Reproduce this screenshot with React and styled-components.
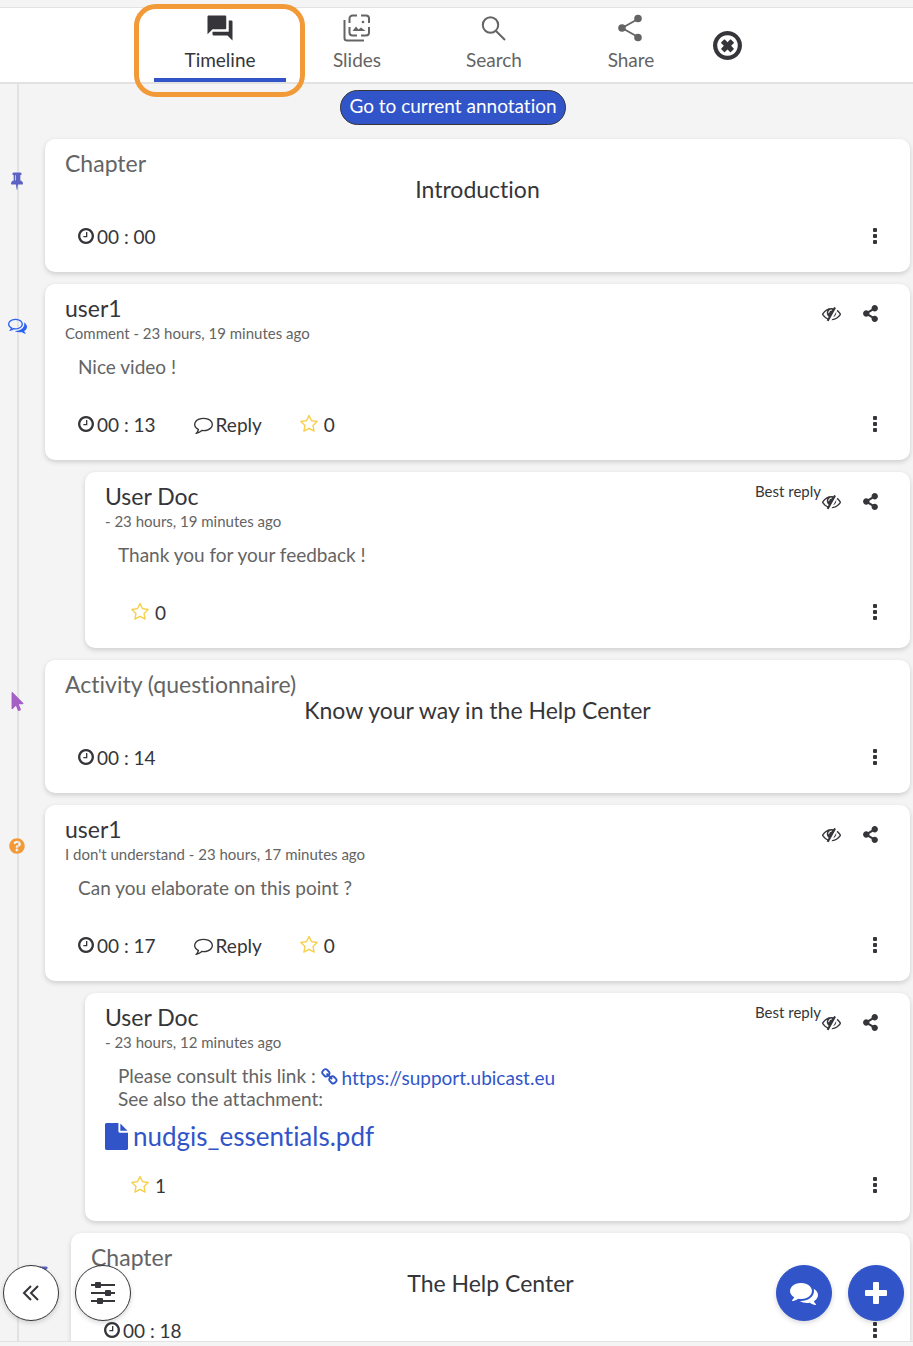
import React from 'react'
import styled, { createGlobalStyle } from 'styled-components';
import { FaMousePointer, FaQuestionCircle, FaShareAlt } from 'react-icons/fa';
import { MdQuestionAnswer } from 'react-icons/md';

const dark = '#35353a';
const grey = '#646464';
const blue = '#3155c9';
const line = '#e2e2e2';

const GlobalStyle = createGlobalStyle`
  * {
    box-sizing: border-box;
  }
  body {
    margin: 0;
    background-color: #f4f4f4;
    color: ${dark};
    font-family: Lato, "Liberation Sans", sans-serif;
    font-size: 19px;
    font-variant-ligatures: none;
    line-height: 23px;
  }
  h2, h3, p, ul {
    margin: 0;
    padding: 0;
    font-weight: 400;
  }
  ul {
    list-style: none;
  }
  button {
    border: none;
    padding: 0;
    background: none;
    color: inherit;
    font: inherit;
    font-variant-ligatures: none;
    cursor: pointer;
  }
  a {
    color: ${blue};
    text-decoration: none;
  }
  svg {
    display: block;
    flex-shrink: 0;
  }
`

const Page = styled.div`
  display: flex;
  flex-direction: column;
  height: 100vh;
  padding: 7px 0 4px;
`

const Panel = styled.div`
  position: relative;
  display: flex;
  flex-direction: column;
  flex: 1;
  min-height: 0;
  border-top: 1px solid ${line};
  border-bottom: 1px solid ${line};
`

const Header = styled.header`
  position: relative;
  z-index: 1;
  display: flex;
  justify-content: center;
  flex-shrink: 0;
  padding-right: 6px;
  background-color: #fff;
  border-bottom: 2px solid ${line};
`

const Tab = styled.button`
  position: relative;
  display: flex;
  flex-direction: column;
  align-items: center;
  width: 137px;
  height: 74px;
  padding-top: 4px;
  color: ${({ $active }) => ($active ? dark : grey)};

  span {
    display: flex;
    flex-direction: column;
    align-items: center;
    gap: 5px;
    width: 132px;
    height: 70px;
    padding-top: 1px;
    border-bottom: 4px solid ${({ $active }) => ($active ? blue : 'transparent')};
  }
  svg {
    height: 30px;
  }
`

const Highlight = styled.i`
  position: absolute;
  top: -4px;
  left: -18px;
  right: -16px;
  bottom: -15px;
  border: 5px solid #f29a37;
  border-radius: 22px;
  pointer-events: none;
`

const CloseButton = styled.button`
  display: flex;
  align-items: center;
  justify-content: center;
  width: 56px;
`

const Scroll = styled.main`
  flex: 1;
  min-height: 0;
  overflow-y: auto;
  scrollbar-width: none;
`

const Timeline = styled.div`
  margin-left: 17px;
  padding: 6px 3px 100px 0;
  border-left: 2px solid ${line};
`

const GoTo = styled.div`
  display: flex;
  justify-content: center;
  margin: 0 4px 14px -19px;
`

const GoToButton = styled.button`
  height: 35px;
  padding: 0 8px 4px;
  background-color: ${blue};
  border: 1px solid ${dark};
  border-radius: 18px;
  color: #fff;
`

const Entries = styled.ul`
  display: flex;
  flex-direction: column;
  gap: 12px;
  margin-left: -19px;
`

const Entry = styled.li`
  display: flex;
  padding-left: ${({ $indent }) => $indent || 0}px;
`

const Gutter = styled.div`
  display: flex;
  align-items: center;
  justify-content: center;
  flex-shrink: 0;
  width: 34px;
  height: 82px;
  margin-right: 11px;
`

const Card = styled.article`
  flex: 1;
  min-width: 0;
  padding: 10px 20px 16px;
  background-color: #fff;
  border-radius: 10px;
  box-shadow: 0 2px 5px rgba(0, 0, 0, 0.16);
`

const CardTop = styled.div`
  display: flex;
  align-items: flex-start;
  justify-content: space-between;
`

const Kind = styled.p`
  color: ${grey};
  font-size: 23px;
  line-height: 28px;
`

const Title = styled.h2`
  margin-bottom: 15px;
  font-size: 23px;
  line-height: 24px;
  text-align: center;
`

const Author = styled.h3`
  margin-bottom: 1px;
  font-size: 23px;
  line-height: 28px;
`

const Meta = styled.p`
  color: ${grey};
  font-size: 15px;
  line-height: 20px;
`

const Tools = styled.div`
  display: flex;
  align-items: flex-start;
  padding-right: 10px;

  span {
    font-size: 15px;
    line-height: 18px;
  }
`

const Tool = styled.button`
  display: flex;
  align-items: center;
  justify-content: center;
  width: 20px;
  height: 38px;

  & + & {
    margin-left: 19px;
  }
`

const Message = styled.div`
  margin: 12px 0 ${({ $file }) => ($file ? 9 : 26)}px 13px;
  color: ${grey};

  a {
    display: inline-flex;
    align-items: center;
    gap: 3px;
    height: 23px;
    padding-top: 3px;
    vertical-align: top;
  }
`

const Attachment = styled.a`
  display: flex;
  align-items: center;
  gap: 5px;
  width: fit-content;
  height: 34px;
  margin-bottom: 12px;
  font-size: 26px;
`

const Actions = styled.div`
  display: flex;
  align-items: center;
  gap: 38px;
  height: 40px;
  padding-left: ${({ $reply }) => ($reply ? 26 : 13)}px;
`

const Action = styled.button`
  display: flex;
  align-items: center;
  gap: ${({ $gap }) => $gap || 3}px;
`

const More = styled.button`
  display: flex;
  align-items: center;
  justify-content: center;
  width: 30px;
  height: 30px;
  margin-left: auto;
`

const Floating = styled.div`
  position: absolute;
  left: 3px;
  right: 9px;
  bottom: 20px;
  display: flex;
  gap: 16px;
  pointer-events: none;
`

const RoundButton = styled.button`
  display: flex;
  align-items: center;
  justify-content: center;
  width: 56px;
  height: 56px;
  margin-left: ${({ $push }) => ($push ? 'auto' : 0)};
  background-color: ${({ $filled }) => ($filled ? blue : '#fff')};
  border: 1px solid ${({ $filled }) => ($filled ? blue : dark)};
  border-radius: 50%;
  box-shadow: 0 2px 5px rgba(0, 0, 0, 0.16);
  color: ${({ $filled }) => ($filled ? '#fff' : dark)};
  pointer-events: auto;
`

const ring = 'm224 0q0 209-103 385.5t-279.5 279.5-385.5 103-385.5-103-279.5-279.5-103-385.5 103-385.5 279.5-279.5 385.5-103 385.5 103 279.5 279.5 103 385.5z'
const circle = 'q0-148-73-273t-198-198-273-73-273 73-198 198-73 273 73 273 198 198 273 73 273-73 198-198 73-273z'

// name: [viewBox, path]
const glyphs = {
  clock: ['0 128 1536 1536', 'M896 544v448q0 14-9 23t-23 9h-320q-14 0-23-9t-9-23v-64q0-14 9-23t23-9h224v-352q0-14 9-23t23-9h64q14 0 23 9t9 23zm416 352' + circle + ring],
  close: ['0 128 1536 1536', 'M1097 1095l-146 146q-10 10-23 10t-23-10l-137-137-137 137q-10 10-23 10t-23-10l-146-146q-10-10-10-23t10-23l137-137-137-137q-10-10-10-23t10-23l146-146q10-10 23-10t23 10l137 137 137-137q10-10 23-10t23 10l146 146q10 10 10 23t-10 23l-137 137 137 137q10 10 10 23t-10 23zm215-199' + circle + ring],
  comment: ['0 0 1792 1792', 'M896 384q-204 0-381.5 69.5t-282 187.5-104.5 255q0 112 71.5 213.5t201.5 175.5l87 50-27 96q-24 91-70 172 152-63 275-171l43-38 57 6q69 8 130 8 204 0 381.5-69.5t282-187.5 104.5-255-104.5-255-282-187.5-381.5-69.5zm896 512q0 174-120 321.5t-326 233-450 85.5q-70 0-145-8-198 175-460 242-49 14-114 22h-5q-15 0-27-10.5t-16-27.5v-1q-3-4-.5-12t2-10 4.5-9.5l6-9 7-8.5 8-9q7-8 31-34.5t34.5-38 31-39.5 32.5-51 27-59 26-76q-157-89-247.5-220t-90.5-281q0-174 120-321.5t326-233 450-85.5 450 85.5 326 233 120 321.5z'],
  commentsOutline: ['0 0 1792 1792', 'M704 384q-153 0-286 52t-211.5 141-78.5 191q0 82 53 158t149 132l97 56-35 84q34-20 62-39l44-31 53 10q78 14 153 14 153 0 286-52t211.5-141 78.5-191-78.5-191-211.5-141-286-52zm0-128q191 0 353.5 68.5t256.5 186.5 94 257-94 257-256.5 186.5-353.5 68.5q-86 0-176-16-124 88-278 128-36 9-86 16h-3q-11 0-20.5-8t-11.5-21q-1-3-1-6.5t.5-6.5 2-6l2.5-5 3.5-5.5 4-5 4.5-5 4-4.5q5-6 23-25t26-29.5 22.5-29 25-38.5 20.5-44q-124-72-195-177t-71-224q0-139 94-257t256.5-186.5 353.5-68.5zm822 1169q10 24 20.5 44t25 38.5 22.5 29 26 29.5 23 25q1 1 4 4.5t4.5 5 4 5 3.5 5.5l2.5 5 2 6 .5 6.5-1 6.5q-3 14-13 22t-22 7q-50-7-86-16-154-40-278-128-90 16-176 16-271 0-472-132 58 4 88 4 161 0 309-45t264-129q125-92 192-212t67-254q0-77-23-152 129 71 204 178t75 230q0 120-71 224.5t-195 176.5z'],
  comments: ['0 0 1792 1792', 'M1408 768q0 139-94 257t-256.5 186.5-353.5 68.5q-86 0-176-16-124 88-278 128-36 9-86 16h-3q-11 0-20.5-8t-11.5-21q-1-3-1-6.5t.5-6.5 2-6l2.5-5 3.5-5.5 4-5 4.5-5 4-4.5q5-6 23-25t26-29.5 22.5-29 25-38.5 20.5-44q-124-72-195-177t-71-224q0-139 94-257t256.5-186.5 353.5-68.5 353.5 68.5 256.5 186.5 94 257zm384 256q0 120-71 224.5t-195 176.5q10 24 20.5 44t25 38.5 22.5 29 26 29.5 23 25q1 1 4 4.5t4.5 5 4 5 3.5 5.5l2.5 5 2 6 .5 6.5-1 6.5q-3 14-13 22t-22 7q-50-7-86-16-154-40-278-128-90 16-176 16-271 0-472-132 58 4 88 4 161 0 309-45t264-129q125-92 192-212t67-254q0-77-23-152 129 71 204 178t75 230z'],
  star: ['0 64 1664 1664', 'M1137 1004l306-297-422-62-189-382-189 382-422 62 306 297-73 421 378-199 377 199zm527-357q0 22-26 48l-363 354 86 500q1 7 1 20 0 50-41 50-19 0-40-12l-449-236-449 236q-22 12-40 12-21 0-31.5-14.5t-10.5-35.5q0-6 2-20l86-500-364-354q-25-27-25-48 0-37 56-46l502-73 225-455q19-41 49-41t49 41l225 455 502 73q56 9 56 46z'],
  pin: ['0 0 1152 1792', 'M480 864v-448q0-14-9-23t-23-9-23 9-9 23v448q0 14 9 23t23 9 23-9 9-23zm672 352q0 26-19 45t-45 19h-429l-51 483q-2 12-10.5 20.5t-20.5 8.5h-1q-27 0-32-27l-76-485h-404q-26 0-45-19t-19-45q0-123 78.5-221.5t177.5-98.5v-512q-52 0-90-38t-38-90 38-90 90-38h640q52 0 90 38t38 90-38 90-90 38v512q99 0 177.5 98.5t78.5 221.5z'],
  eye: ['0 0 1792 1792', 'M555 1335l78-141q-87-63-136-159t-49-203q0-121 61-225-229 117-381 353 167 258 427 375zm389-759q0-20-14-34t-34-14q-125 0-214.5 89.5t-89.5 214.5q0 20 14 34t34 14 34-14 14-34q0-86 61-147t147-61q20 0 34-14t14-34zm363-191q0 7-1 9-106 189-316 567t-315 566l-49 89q-10 16-28 16-12 0-134-70-16-10-16-28 0-12 44-87-143-65-263.5-173t-208.5-245q-20-31-20-69t20-69q153-235 380-371t496-136q89 0 180 17l54-97q10-16 28-16 5 0 18 6t31 15.5 33 18.5 31.5 18.5 19.5 11.5q16 10 16 27zm37 447q0 139-79 253.5t-209 164.5l280-502q8 45 8 84zm448 128q0 35-20 69-39 64-109 145-150 172-347.5 267t-419.5 95l74-132q212-18 392.5-137t301.5-307q-115-179-282-294l63-112q95 64 182.5 153t144.5 184q20 34 20 69z'],
  link: ['0 0 1792 1792', 'M1456 1216q0-40-28-68l-208-208q-28-28-68-28-42 0-72 32 3 3 19 18.5t21.5 21.5 15 19 13 25.5 3.5 27.5q0 40-28 68t-68 28q-15 0-27.5-3.5t-25.5-13-19-15-21.5-21.5-18.5-19q-33 31-33 73 0 40 28 68l206 207q27 27 68 27 40 0 68-26l147-146q28-28 28-67zm-703-705q0-40-28-68l-206-207q-28-28-68-28-39 0-68 27l-147 146q-28 28-28 67 0 40 28 68l208 208q27 27 68 27 42 0 72-31-3-3-19-18.5t-21.5-21.5-15-19-13-25.5-3.5-27.5q0-40 28-68t68-28q15 0 27.5 3.5t25.5 13 19 15 21.5 21.5 18.5 19q33-31 33-73zm895 705q0 120-85 203l-147 146q-83 83-203 83-121 0-204-85l-206-207q-83-83-83-203 0-123 88-209l-88-88q-86 88-208 88-120 0-204-84l-208-208q-84-84-84-204t85-203l147-146q83-83 203-83 121 0 204 85l206 207q83 83 83 203 0 123-88 209l88 88q86-88 208-88 120 0 204 84l208 208q84 84 84 204z'],
  file: ['128 0 1536 1792', 'M1152 512v-472q22 14 36 28l408 408q14 14 28 36h-472zm-128 32q0 40 28 68t68 28h544v1056q0 40-28 68t-68 28h-1344q-40 0-68-28t-28-68v-1600q0-40 28-68t68-28h800v544z'],
}

const Glyph = ({ name, width, height, color }) => (
  <svg width={width} height={height || width} viewBox={glyphs[name][0]} fill={color || 'currentColor'} aria-hidden="true">
    <path d={glyphs[name][1]} />
  </svg>
)

const SlidesIcon = () => (
  <svg width="28" height="28" viewBox="0 0 28 28" fill="none" stroke="currentColor" strokeWidth="2" aria-hidden="true">
    <path d="M1.5 6V24a2.5 2.5 0 0 0 2.5 2.5H21" />
    <path d="M6.5 9V4.5a3 3 0 0 1 3-3H14M18 1.5h5a3 3 0 0 1 3 3V9M26 13v5.500a3 3 0 0 1-3 3H18M14 21.500H9.500a3 3 0 0 1-3-3V13" />
    <path d="M9.500 17l3.500-4.500 2.500 3 2.500-2 4.500 3.500z" fill="currentColor" stroke="none" />
    <circle cx="20" cy="8" r="1.300" fill="currentColor" stroke="none" />
  </svg>
)

const SearchIcon = () => (
  <svg width="28" height="28" viewBox="0 0 28 28" fill="none" stroke="currentColor" strokeWidth="2" aria-hidden="true">
    <circle cx="10.500" cy="11" r="7.700" />
    <path d="M16 17l9 9" />
  </svg>
)

const ShareIcon = () => (
  <svg width="28" height="28" viewBox="0 0 28 28" fill="currentColor" stroke="currentColor" strokeWidth="0" aria-hidden="true">
    <path d="M21 5L5 14 21 23" fill="none" strokeWidth="1.800" />
    <circle cx="21" cy="4.500" r="3.800" />
    <circle cx="5" cy="14" r="3.800" />
    <circle cx="21" cy="23.500" r="3.800" />
  </svg>
)

const DotsIcon = () => (
  <svg width="6" height="16" viewBox="0 0 6 16" fill="currentColor" aria-hidden="true">
    <rect x="1" y="0" width="4" height="4" rx="1" />
    <rect x="1" y="6" width="4" height="4" rx="1" />
    <rect x="1" y="12" width="4" height="4" rx="1" />
  </svg>
)

const CollapseIcon = () => (
  <svg width="18" height="18" viewBox="0 0 18 18" fill="none" stroke="currentColor" strokeWidth="2" aria-hidden="true">
    <path d="M9 2L2 9l7 7M16 2L9 9l7 7" />
  </svg>
)

const SlidersIcon = () => (
  <svg width="26" height="24" viewBox="0 0 26 24" fill="currentColor" aria-hidden="true">
    <path d="M1 3h24v2H1zM1 11h24v2H1zM1 19h24v2H1z" />
    <rect x="5" y="1" width="6" height="6" rx="1" />
    <rect x="15" y="9" width="6" height="6" rx="1" />
    <rect x="7" y="17" width="6" height="6" rx="1" />
  </svg>
)

const PlusIcon = () => (
  <svg width="22" height="22" viewBox="0 0 22 22" fill="currentColor" aria-hidden="true">
    <rect x="8" y="0" width="6" height="22" rx="1" />
    <rect x="0" y="8" width="22" height="6" rx="1" />
  </svg>
)

const markers = {
  pin: <Glyph name="pin" width={12} height={19} color="#5c62c4" />,
  comment: <Glyph name="commentsOutline" width={19} color="#2c62f0" />,
  pointer: <FaMousePointer size={19} color="#a45fc4" />,
  question: <FaQuestionCircle size={16} color="#f29a37" />,
}

const tabs = [
  { label: 'Timeline', icon: <MdQuestionAnswer size={30} />, active: true },
  { label: 'Slides', icon: <SlidesIcon /> },
  { label: 'Search', icon: <SearchIcon /> },
  { label: 'Share', icon: <ShareIcon /> },
]

const entries = [
  { marker: 'pin', kind: 'Chapter', title: 'Introduction', time: '00 : 00' },
  { marker: 'comment', author: 'user1', meta: 'Comment - 23 hours, 19 minutes ago', text: 'Nice video !', time: '00 : 13', stars: 0 },
  { reply: true, indent: 40, author: 'User Doc', meta: '- 23 hours, 19 minutes ago', text: 'Thank you for your feedback !', stars: 0 },
  { marker: 'pointer', kind: 'Activity (questionnaire)', title: 'Know your way in the Help Center', time: '00 : 14' },
  { marker: 'question', author: 'user1', meta: "I don't understand - 23 hours, 17 minutes ago", text: 'Can you elaborate on this point ?', time: '00 : 17', stars: 0 },
  { reply: true, indent: 40, author: 'User Doc', meta: '- 23 hours, 12 minutes ago', text: 'Please consult this link : ', link: 'https://support.ubicast.eu', more: 'See also the attachment:', file: 'nudgis_essentials.pdf', stars: 1 },
  { marker: 'pin', indent: 26, kind: 'Chapter', title: 'The Help Center', time: '00 : 18' },
]

const CardActions = ({ entry }) => (
  <Actions $reply={entry.reply}>
    {entry.time && <Action><Glyph name="clock" width={16} />{entry.time}</Action>}
    {entry.author && !entry.reply && <Action><Glyph name="comment" width={19} />Reply</Action>}
    {entry.author && <Action $gap={6}><Glyph name="star" width={18} color="#f6d04d" />{entry.stars}</Action>}
    <More aria-label="More"><DotsIcon /></More>
  </Actions>
)

const CommentCard = ({ entry }) => (
  <Card>
    <CardTop>
      <div>
        <Author>{entry.author}</Author>
        <Meta>{entry.meta}</Meta>
      </div>
      <Tools>
        {entry.reply && <span>Best reply</span>}
        <Tool aria-label="Hide"><Glyph name="eye" width={19} /></Tool>
        <Tool aria-label="Share"><FaShareAlt size={17} /></Tool>
      </Tools>
    </CardTop>
    <Message $file={entry.file}>
      <p>
        {entry.text}
        {entry.link && <a href={entry.link}><Glyph name="link" width={18} />{entry.link}</a>}
      </p>
      {entry.more && <p>{entry.more}</p>}
    </Message>
    {entry.file && (
      <Attachment href="#file"><Glyph name="file" width={23} height={27} />{entry.file}</Attachment>
    )}
    <CardActions entry={entry} />
  </Card>
)

const ChapterCard = ({ entry }) => (
  <Card>
    <Kind>{entry.kind}</Kind>
    <Title>{entry.title}</Title>
    <CardActions entry={entry} />
  </Card>
)

const App = () => {
  return (
    <Page>
      <GlobalStyle />
      <Panel>
        <Header>
          {tabs.map((tab) => (
            <Tab key={tab.label} $active={tab.active}>
              <span>{tab.icon}{tab.label}</span>
              {tab.active && <Highlight />}
            </Tab>
          ))}
          <CloseButton aria-label="Close"><Glyph name="close" width={29} /></CloseButton>
        </Header>
        <Scroll>
          <Timeline>
            <GoTo><GoToButton>Go to current annotation</GoToButton></GoTo>
            <Entries>
              {entries.map((entry, i) => (
                <Entry key={i} $indent={entry.indent}>
                  <Gutter>{markers[entry.marker]}</Gutter>
                  {entry.title ? <ChapterCard entry={entry} /> : <CommentCard entry={entry} />}
                </Entry>
              ))}
            </Entries>
          </Timeline>
        </Scroll>
        <Floating>
          <RoundButton aria-label="Collapse"><CollapseIcon /></RoundButton>
          <RoundButton aria-label="Filters"><SlidersIcon /></RoundButton>
          <RoundButton aria-label="Comment" $filled $push><Glyph name="comments" width={28} /></RoundButton>
          <RoundButton aria-label="Add" $filled><PlusIcon /></RoundButton>
        </Floating>
      </Panel>
    </Page>
  )
}

export default App
